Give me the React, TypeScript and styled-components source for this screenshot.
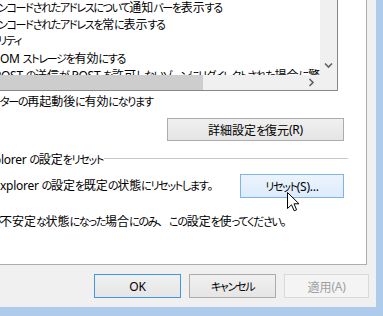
import React from "react";
import styled, { createGlobalStyle, css } from "styled-components";

const Global = createGlobalStyle`
  html, body { margin: 0; padding: 0; background: #f0f0f0; overflow: hidden; }
  body {
    font-family: "Noto Sans", "Noto Sans CJK JP", sans-serif;
    font-size: 12px;
    color: #000;
  }
`;

/* ---------- text runs: Meiryo UI has narrow kana, full-width kanji ---------- */

const Kana = styled.span`
  font-family: "Noto Sans CJK JP", sans-serif;
  font-size: 11px;
  font-feature-settings: "palt";
  letter-spacing: -1.3px;
`;

const Latin = styled.span`
  font-family: "Noto Sans", sans-serif;
  letter-spacing: -0.25px;
`;

const Cjk = styled.span`
  font-family: "Noto Sans CJK JP", sans-serif;
`;

const kindOf = (ch: string) =>
  /[\u3040-\u30ff]/.test(ch) ? "k" : /[\u0000-\u024f]/.test(ch) ? "l" : "c";

function JP({ t }: { t: string }) {
  const runs: { kind: string; text: string }[] = [];
  for (const ch of Array.from(t)) {
    const k = kindOf(ch);
    const last = runs[runs.length - 1];
    if (last && last.kind === k) last.text += ch;
    else runs.push({ kind: k, text: ch });
  }
  return (
    <>
      {runs.map((r, i) =>
        r.kind === "k" ? (
          <Kana key={i}>{r.text}</Kana>
        ) : r.kind === "l" ? (
          <Latin key={i}>{r.text}</Latin>
        ) : (
          <Cjk key={i}>{r.text}</Cjk>
        )
      )}
    </>
  );
}

/* the part of a line that lies left of the visible window: it ends where its line's pad begins */
const Hidden = styled.span`
  display: inline-flex;
  width: 0;
  justify-content: flex-end;
  white-space: nowrap;
`;

/* ---------- window ---------- */

const Window = styled.div`
  width: 383px;
  height: 316px;
  box-sizing: border-box;
  padding: 0 7px 9px 0;
  background: #aecbeb;
  overflow: hidden;
  display: flex;
`;

const Dialog = styled.div`
  flex: 1;
  min-width: 0;
  background: #f0f0f0;
  display: flex;
  flex-direction: column;
`;

const TabPage = styled.div`
  width: 467px;
  margin-left: -100px;
  height: 265px;
  box-sizing: border-box;
  background: #fff;
  border-right: 1px solid #adadad;
  border-bottom: 1px solid #adadad;
  display: flex;
  flex-direction: column;
  flex-shrink: 0;
`;

/* ---------- list box ---------- */

const ListBox = styled.div`
  height: 91px;
  margin-right: 28px;
  box-sizing: border-box;
  border: 1px solid #828790;
  border-top: none;
  display: flex;
  flex-direction: column;
  flex-shrink: 0;
`;

const ListArea = styled.div`
  height: 75px;
  display: flex;
`;

const Items = styled.div`
  flex: 1;
  min-width: 0;
  overflow: hidden;
  background: #fff;
`;

const ItemRow = styled.div<{ $pad: number }>`
  height: 17px;
  line-height: 17px;
  white-space: nowrap;
  padding-left: ${(p) => p.$pad}px;
  &:first-child { margin-top: -2px; }
`;

const VScroll = styled.div`
  width: 17px;
  background: #f0f0f0;
  display: flex;
  flex-direction: column;
  justify-content: flex-end;
  padding-bottom: 1px;
`;

const ArrowBox = styled.div<{ $h?: number }>`
  width: 17px;
  height: ${(p) => p.$h ?? 17}px;
  display: flex;
  align-items: center;
  justify-content: center;
`;

const HScroll = styled.div`
  height: 15px;
  display: flex;
  background: #f0f0f0;
`;

const HTrack = styled.div`
  flex: 1;
  display: flex;
  justify-content: space-between;
`;

const Thumb = styled.div<{ $w: number }>`
  width: ${(p) => p.$w}px;
  background: #cdcdcd;
`;

const Corner = styled.div`
  width: 17px;
  background: #f0f0f0;
`;

/* ---------- texts and buttons of the tab page ---------- */

const TextLine = styled.div<{ $pad: number; $top: number }>`
  line-height: 17px;
  white-space: nowrap;
  padding-left: ${(p) => p.$pad}px;
  margin-top: ${(p) => p.$top}px;
`;

type Variant = "normal" | "default" | "hover" | "disabled";

const Button = styled.button<{ $variant?: Variant; $w: number; $h?: number }>`
  width: ${(p) => p.$w}px;
  height: ${(p) => p.$h ?? 24}px;
  box-sizing: border-box;
  margin: 0;
  padding: 0;
  font: inherit;
  font-size: 12px;
  color: #000;
  white-space: nowrap;
  border: 1px solid #acacac;
  background: linear-gradient(#f0f0f0, #e5e5e5);
  display: flex;
  align-items: center;
  justify-content: center;
  flex-shrink: 0;
  ${(p) =>
    p.$variant === "default" &&
    css`
      border-color: #3f98e6;
    `}
  ${(p) =>
    p.$variant === "hover" &&
    css`
      border-color: #7eb4ea;
      background: linear-gradient(#ecf4fc, #dcecfc);
    `}
  ${(p) =>
    p.$variant === "disabled" &&
    css`
      border-color: #d9d9d9;
      background: #f4f4f4;
      color: #a0a0a0;
    `}
`;

const RestoreButton = styled(Button)`
  align-self: flex-end;
  margin-right: 22px;
  margin-top: 8px;
`;

const GroupBox = styled.div`
  margin-top: 9px;
  margin-right: 18px;
  display: flex;
  flex-direction: column;
`;

const GroupHeader = styled.div<{ $pad: number }>`
  display: flex;
  align-items: center;
  height: 17px;
  padding-left: ${(p) => p.$pad}px;
`;

const GroupLabel = styled.span`
  white-space: nowrap;
  line-height: 17px;
`;

const GroupRule = styled.div`
  flex: 1;
  height: 1px;
  background: #c8c8c8;
  margin-left: 1px;
`;

const GroupRow = styled.div<{ $pad: number }>`
  margin-top: 7px;
  display: flex;
  align-items: center;
  justify-content: space-between;
  padding-left: ${(p) => p.$pad}px;
  padding-right: 4px;
`;

const RowText = styled.span`
  white-space: nowrap;
  line-height: 17px;
  margin-top: -2px;
`;

const CursorHolder = styled.span`
  position: relative;
  display: inline-flex;
`;

const Cursor = styled.svg`
  position: absolute;
  left: 47px;
  top: 18px;
  pointer-events: none;
`;

const ButtonRow = styled.div`
  margin-top: 9px;
  padding-right: 7px;
  display: flex;
  justify-content: flex-end;
  gap: 8px;
`;

const Chevron = ({ dir }: { dir: "down" | "right" }) => (
  <svg width="9" height="9" viewBox="0 0 9 9" fill="none" stroke="#606060" strokeWidth="1.6">
    {dir === "down" ? <path d="M1 2.5 L4.5 6 L8 2.5" /> : <path d="M2.5 1 L6 4.5 L2.5 8" />}
  </svg>
);

/* the list's text starts 99px left of the window's edge */
const items: { hidden: string; text: string; pad: number }[] = [
  { hidden: "エ", text: "ンコードされたアドレスについて通知バーを表示する", pad: 97 },
  { hidden: "エ", text: "ンコードされたアドレスを常に表示する", pad: 97 },
  { hidden: "セキュ", text: "リティ", pad: 97 },
  { hidden: "D", text: "OM ストレージを有効にする", pad: 99 },
  { hidden: "P", text: "OST の送信が POST を許可しないゾーンにリダイレクトされた場合に警告する", pad: 100 },
];

export default function App() {
  return (
    <>
      <Global />
      <Window>
        <Dialog>
          <TabPage>
            <ListBox>
              <ListArea>
                <Items>
                  {items.map((it, i) => (
                    <ItemRow key={i} $pad={it.pad}>
                      <Hidden>
                        <JP t={it.hidden} />
                      </Hidden>
                      <JP t={it.text} />
                    </ItemRow>
                  ))}
                </Items>
                <VScroll>
                  <ArrowBox>
                    <Chevron dir="down" />
                  </ArrowBox>
                </VScroll>
              </ListArea>
              <HScroll>
                <HTrack>
                  <Thumb $w={302} />
                  <ArrowBox $h={15}>
                    <Chevron dir="right" />
                  </ArrowBox>
                </HTrack>
                <Corner />
              </HScroll>
            </ListBox>
            <TextLine $pad={100} $top={1}>
              <Hidden>
                <JP t="*コンピュー" />
              </Hidden>
              <JP t="ターの再起動後に有効になります" />
            </TextLine>
            <RestoreButton $w={177} $h={23}>
              <JP t="詳細設定を復元(R)" />
            </RestoreButton>
            <GroupBox>
              <GroupHeader $pad={101}>
                <GroupLabel>
                  <Hidden>
                    <JP t="Internet Exp" />
                  </Hidden>
                  <JP t="lorer の設定をリセット" />
                </GroupLabel>
                <GroupRule />
              </GroupHeader>
              <GroupRow $pad={100}>
                <RowText>
                  <Hidden>
                    <JP t="Internet E" />
                  </Hidden>
                  <JP t="xplorer の設定を既定の状態にリセットします。" />
                </RowText>
                <CursorHolder>
                  <Button $variant="hover" $w={104} $h={24}>
                    <JP t="リセット(S)..." />
                  </Button>
                  <Cursor width="13" height="20" viewBox="0 0 13 20">
                    <path
                      d="M0.5 0.5 L0.5 16.5 L4.5 12.8 L7.2 18.8 L9.6 17.8 L7 11.8 L12 11.8 Z"
                      fill="#fff"
                      stroke="#000"
                      strokeWidth="1"
                    />
                  </Cursor>
                </CursorHolder>
              </GroupRow>
              <TextLine $pad={100} $top={14}>
                <Hidden>
                  <JP t="ブラウザーが" />
                </Hidden>
                <JP t="不安定な状態になった場合にのみ、この設定を使ってください。" />
              </TextLine>
            </GroupBox>
          </TabPage>
          <ButtonRow>
            <Button $variant="default" $w={87}>
              <JP t="OK" />
            </Button>
            <Button $w={87}>
              <JP t="キャンセル" />
            </Button>
            <Button $variant="disabled" $w={85}>
              <JP t="適用(A)" />
            </Button>
          </ButtonRow>
        </Dialog>
      </Window>
    </>
  );
}
